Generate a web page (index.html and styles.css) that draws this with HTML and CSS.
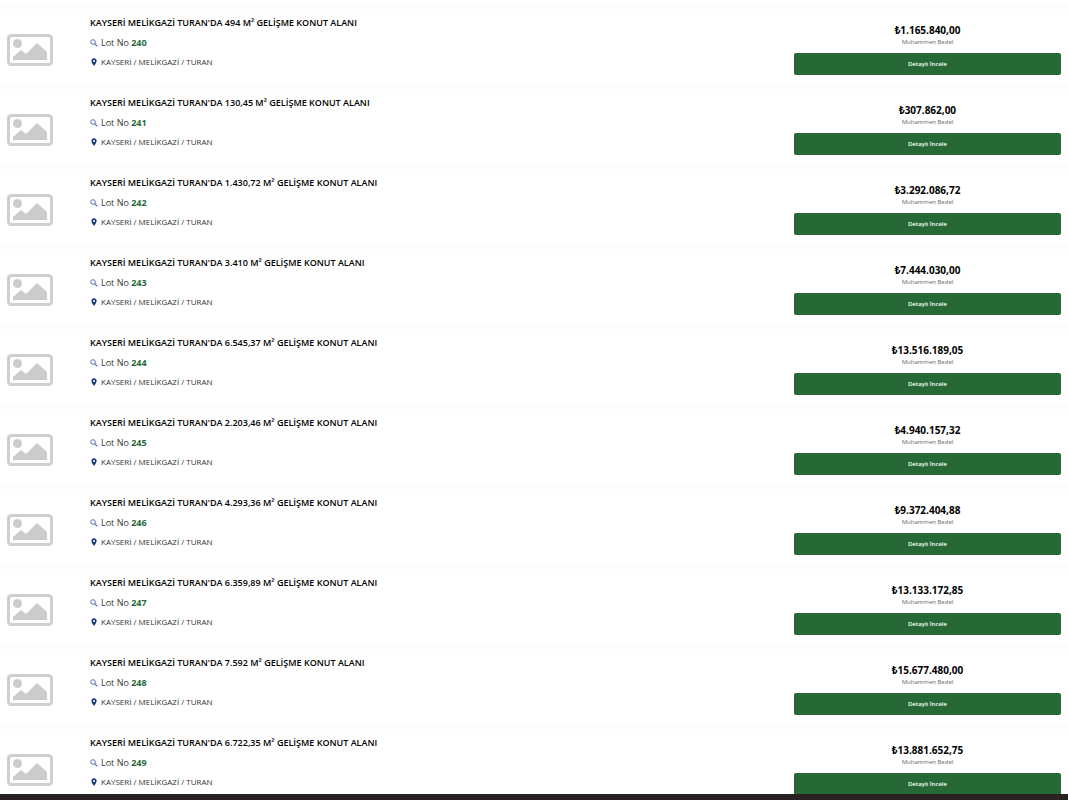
FILE: index.html
```html
<!DOCTYPE html>
<html lang="tr">
<head>
    <meta charset="UTF-8">
    <meta name="viewport" content="width=device-width, initial-scale=1.0">
    <title>Lot Listesi</title>
    <link rel="stylesheet" href="styles.css">
</head>
<body>
    <svg class="icon-defs" aria-hidden="true">
        <symbol id="icon-image" viewBox="0 0 46 32">
            <rect x="1.5" y="1.5" width="43" height="29" rx="3" fill="#fff" stroke="#cfcfcf" stroke-width="3" />
            <circle cx="10.5" cy="9.5" r="4.5" fill="#ccc" />
            <path d="M6 26v-3l8-7 5 4 11-11 10 9v8z" fill="#ccc" />
        </symbol>
        <symbol id="icon-search" viewBox="0 0 8 8">
            <circle cx="3" cy="3" r="2.3" fill="none" stroke="#47629b" stroke-width="0.9" />
            <path d="M4.8 4.8l2.5 2.5" stroke="#47629b" stroke-width="1.1" />
        </symbol>
        <symbol id="icon-pin" viewBox="0 0 8 8">
            <path fill-rule="evenodd" d="M4 0.3a2.6 2.6 0 0 0-2.6 2.6C1.4 4.8 4 7.8 4 7.8s2.6-3 2.6-4.9A2.6 2.6 0 0 0 4 0.3zM4 2a1 1 0 1 1 0 2 1 1 0 0 1 0-2z" fill="#1f3a7d" />
        </symbol>
    </svg>

    <main class="lot-list">
        <article class="lot">
            <svg class="lot-image"><use href="#icon-image" /></svg>
            <div class="lot-info">
                <h2 class="lot-title">KAYSERİ MELİKGAZİ TURAN'DA 494 M² GELİŞME KONUT ALANI</h2>
                <p class="lot-no"><svg class="icon"><use href="#icon-search" /></svg><span>Lot No <b>240</b></span></p>
                <p class="lot-place"><svg class="icon"><use href="#icon-pin" /></svg>KAYSERİ / MELİKGAZİ / TURAN</p>
            </div>
            <div class="lot-price">
                <strong class="price">₺1.165.840,00</strong>
                <span class="price-label">Muhammen Bedel</span>
                <a href="#" class="detail-button">Detaylı İncele</a>
            </div>
        </article>
        <article class="lot">
            <svg class="lot-image"><use href="#icon-image" /></svg>
            <div class="lot-info">
                <h2 class="lot-title">KAYSERİ MELİKGAZİ TURAN'DA 130,45 M² GELİŞME KONUT ALANI</h2>
                <p class="lot-no"><svg class="icon"><use href="#icon-search" /></svg><span>Lot No <b>241</b></span></p>
                <p class="lot-place"><svg class="icon"><use href="#icon-pin" /></svg>KAYSERİ / MELİKGAZİ / TURAN</p>
            </div>
            <div class="lot-price">
                <strong class="price">₺307.862,00</strong>
                <span class="price-label">Muhammen Bedel</span>
                <a href="#" class="detail-button">Detaylı İncele</a>
            </div>
        </article>
        <article class="lot">
            <svg class="lot-image"><use href="#icon-image" /></svg>
            <div class="lot-info">
                <h2 class="lot-title">KAYSERİ MELİKGAZİ TURAN'DA 1.430,72 M² GELİŞME KONUT ALANI</h2>
                <p class="lot-no"><svg class="icon"><use href="#icon-search" /></svg><span>Lot No <b>242</b></span></p>
                <p class="lot-place"><svg class="icon"><use href="#icon-pin" /></svg>KAYSERİ / MELİKGAZİ / TURAN</p>
            </div>
            <div class="lot-price">
                <strong class="price">₺3.292.086,72</strong>
                <span class="price-label">Muhammen Bedel</span>
                <a href="#" class="detail-button">Detaylı İncele</a>
            </div>
        </article>
        <article class="lot">
            <svg class="lot-image"><use href="#icon-image" /></svg>
            <div class="lot-info">
                <h2 class="lot-title">KAYSERİ MELİKGAZİ TURAN'DA 3.410 M² GELİŞME KONUT ALANI</h2>
                <p class="lot-no"><svg class="icon"><use href="#icon-search" /></svg><span>Lot No <b>243</b></span></p>
                <p class="lot-place"><svg class="icon"><use href="#icon-pin" /></svg>KAYSERİ / MELİKGAZİ / TURAN</p>
            </div>
            <div class="lot-price">
                <strong class="price">₺7.444.030,00</strong>
                <span class="price-label">Muhammen Bedel</span>
                <a href="#" class="detail-button">Detaylı İncele</a>
            </div>
        </article>
        <article class="lot">
            <svg class="lot-image"><use href="#icon-image" /></svg>
            <div class="lot-info">
                <h2 class="lot-title">KAYSERİ MELİKGAZİ TURAN'DA 6.545,37 M² GELİŞME KONUT ALANI</h2>
                <p class="lot-no"><svg class="icon"><use href="#icon-search" /></svg><span>Lot No <b>244</b></span></p>
                <p class="lot-place"><svg class="icon"><use href="#icon-pin" /></svg>KAYSERİ / MELİKGAZİ / TURAN</p>
            </div>
            <div class="lot-price">
                <strong class="price">₺13.516.189,05</strong>
                <span class="price-label">Muhammen Bedel</span>
                <a href="#" class="detail-button">Detaylı İncele</a>
            </div>
        </article>
        <article class="lot">
            <svg class="lot-image"><use href="#icon-image" /></svg>
            <div class="lot-info">
                <h2 class="lot-title">KAYSERİ MELİKGAZİ TURAN'DA 2.203,46 M² GELİŞME KONUT ALANI</h2>
                <p class="lot-no"><svg class="icon"><use href="#icon-search" /></svg><span>Lot No <b>245</b></span></p>
                <p class="lot-place"><svg class="icon"><use href="#icon-pin" /></svg>KAYSERİ / MELİKGAZİ / TURAN</p>
            </div>
            <div class="lot-price">
                <strong class="price">₺4.940.157,32</strong>
                <span class="price-label">Muhammen Bedel</span>
                <a href="#" class="detail-button">Detaylı İncele</a>
            </div>
        </article>
        <article class="lot">
            <svg class="lot-image"><use href="#icon-image" /></svg>
            <div class="lot-info">
                <h2 class="lot-title">KAYSERİ MELİKGAZİ TURAN'DA 4.293,36 M² GELİŞME KONUT ALANI</h2>
                <p class="lot-no"><svg class="icon"><use href="#icon-search" /></svg><span>Lot No <b>246</b></span></p>
                <p class="lot-place"><svg class="icon"><use href="#icon-pin" /></svg>KAYSERİ / MELİKGAZİ / TURAN</p>
            </div>
            <div class="lot-price">
                <strong class="price">₺9.372.404,88</strong>
                <span class="price-label">Muhammen Bedel</span>
                <a href="#" class="detail-button">Detaylı İncele</a>
            </div>
        </article>
        <article class="lot">
            <svg class="lot-image"><use href="#icon-image" /></svg>
            <div class="lot-info">
                <h2 class="lot-title">KAYSERİ MELİKGAZİ TURAN'DA 6.359,89 M² GELİŞME KONUT ALANI</h2>
                <p class="lot-no"><svg class="icon"><use href="#icon-search" /></svg><span>Lot No <b>247</b></span></p>
                <p class="lot-place"><svg class="icon"><use href="#icon-pin" /></svg>KAYSERİ / MELİKGAZİ / TURAN</p>
            </div>
            <div class="lot-price">
                <strong class="price">₺13.133.172,85</strong>
                <span class="price-label">Muhammen Bedel</span>
                <a href="#" class="detail-button">Detaylı İncele</a>
            </div>
        </article>
        <article class="lot">
            <svg class="lot-image"><use href="#icon-image" /></svg>
            <div class="lot-info">
                <h2 class="lot-title">KAYSERİ MELİKGAZİ TURAN'DA 7.592 M² GELİŞME KONUT ALANI</h2>
                <p class="lot-no"><svg class="icon"><use href="#icon-search" /></svg><span>Lot No <b>248</b></span></p>
                <p class="lot-place"><svg class="icon"><use href="#icon-pin" /></svg>KAYSERİ / MELİKGAZİ / TURAN</p>
            </div>
            <div class="lot-price">
                <strong class="price">₺15.677.480,00</strong>
                <span class="price-label">Muhammen Bedel</span>
                <a href="#" class="detail-button">Detaylı İncele</a>
            </div>
        </article>
        <article class="lot">
            <svg class="lot-image"><use href="#icon-image" /></svg>
            <div class="lot-info">
                <h2 class="lot-title">KAYSERİ MELİKGAZİ TURAN'DA 6.722,35 M² GELİŞME KONUT ALANI</h2>
                <p class="lot-no"><svg class="icon"><use href="#icon-search" /></svg><span>Lot No <b>249</b></span></p>
                <p class="lot-place"><svg class="icon"><use href="#icon-pin" /></svg>KAYSERİ / MELİKGAZİ / TURAN</p>
            </div>
            <div class="lot-price">
                <strong class="price">₺13.881.652,75</strong>
                <span class="price-label">Muhammen Bedel</span>
                <a href="#" class="detail-button">Detaylı İncele</a>
            </div>
        </article>
    </main>
    <footer class="bottom-bar"></footer>
</body>
</html>
```

FILE: styles.css
```css
* {
    box-sizing: border-box;
}
body {
    margin: 0;
    height: 100vh;
    display: flex;
    flex-direction: column;
    font-family: "Open Sans", "Noto Sans", sans-serif;
    background-color: #fff;
    color: #000;
}
.icon-defs {
    display: none;
}
.lot-list {
    flex: 1;
    min-height: 0;
    overflow: hidden;
    padding-top: 5px;
}
.lot {
    display: flex;
    align-items: center;
    height: 80px;
    padding: 0 7px;
    border-top: 4px solid #fdfdfd;
}
.lot-image {
    width: 46px;
    height: 32px;
    margin-top: 6px;
    flex-shrink: 0;
}
.lot-info {
    flex: 1;
    padding-left: 37px;
    padding-bottom: 10px;
}
.lot-title {
    margin: 0;
    font-size: 9px;
    line-height: 20px;
    font-weight: 600;
}
.lot-no,
.lot-place {
    display: flex;
    align-items: center;
    gap: 3px;
    margin: 0;
    color: #333;
}
.lot-no {
    font-size: 9px;
    line-height: 20px;
}
.lot-no b {
    font-weight: 700;
    color: #276936;
}
.lot-place {
    font-size: 8px;
    line-height: 18px;
}
.icon {
    width: 8px;
    height: 8px;
}
.lot-price {
    display: flex;
    flex-direction: column;
    align-items: center;
    flex: 0 0 267px;
    padding-top: 4px;
}
.price {
    font-size: 10px;
    font-weight: 700;
    line-height: 14px;
}
.price-label {
    font-size: 6px;
    line-height: 10px;
    color: #666;
}
.detail-button {
    align-self: stretch;
    margin-top: 6px;
    border-radius: 2px;
    background-color: #276936;
    color: #fff;
    font-size: 6px;
    font-weight: 600;
    line-height: 22px;
    text-align: center;
    text-decoration: none;
}
.detail-button:hover {
    background-color: #1d5229;
}
.bottom-bar {
    height: 6px;
    background-color: #2a2222;
}
```
